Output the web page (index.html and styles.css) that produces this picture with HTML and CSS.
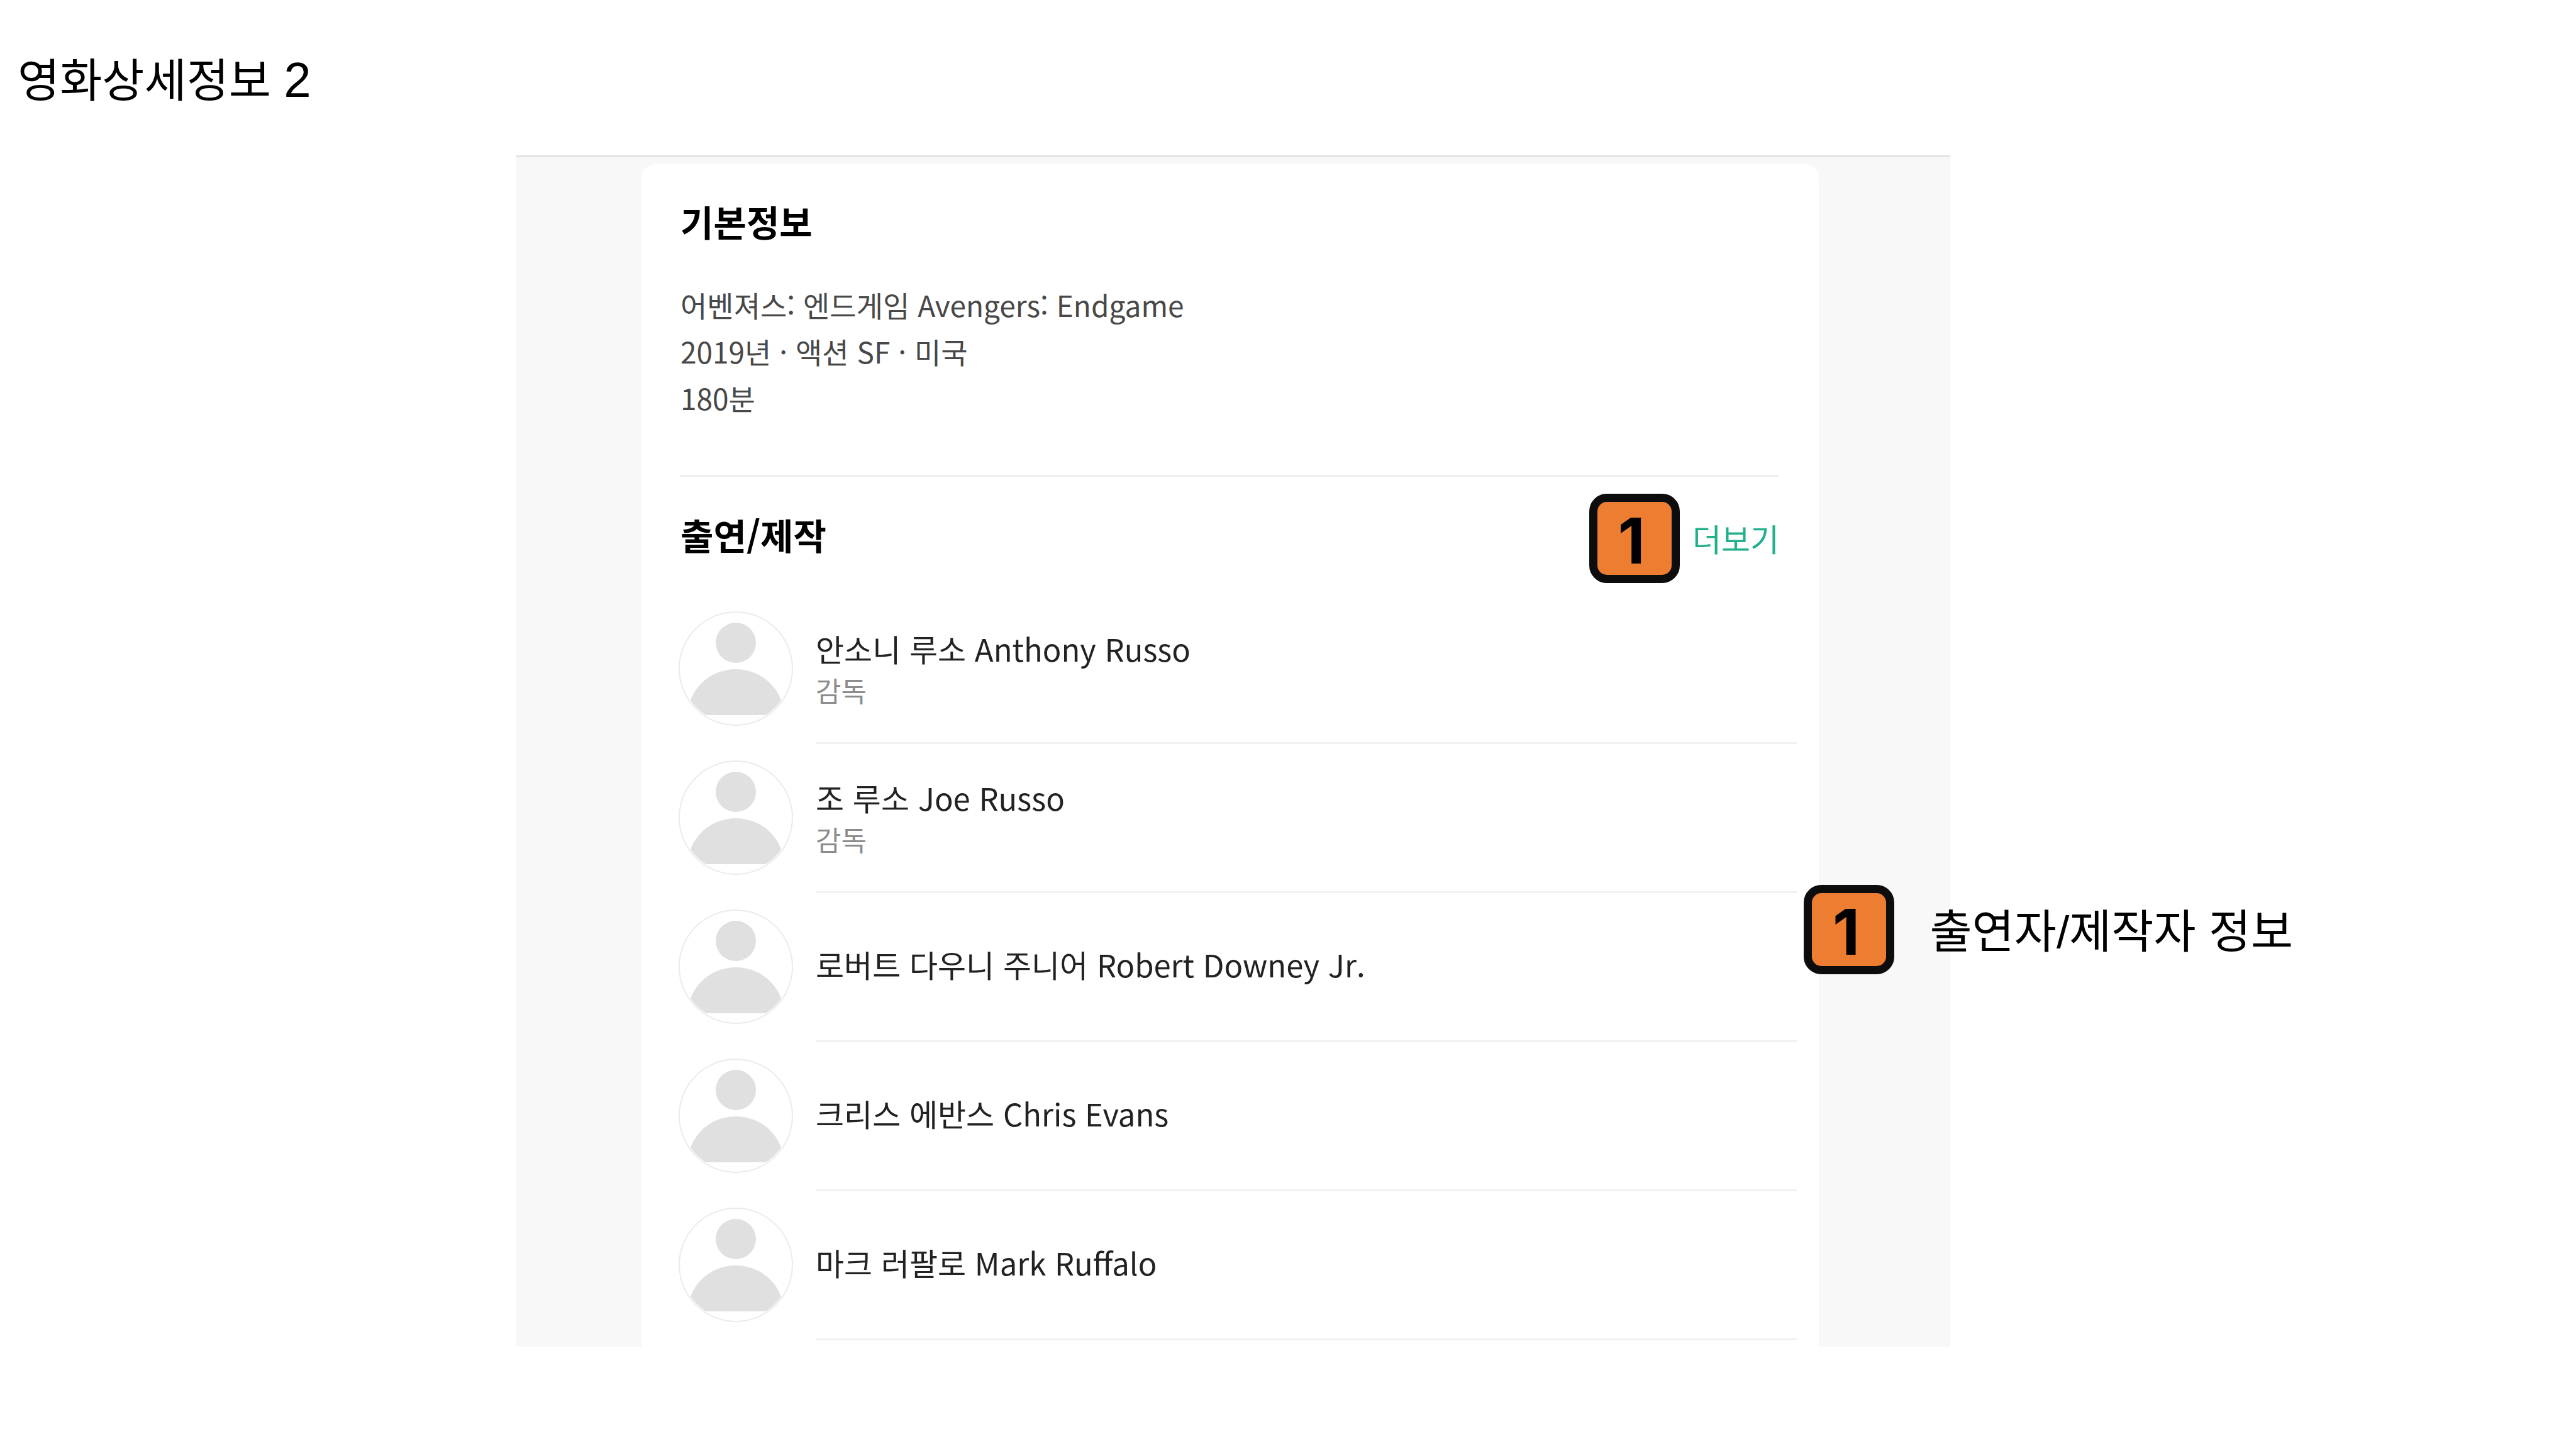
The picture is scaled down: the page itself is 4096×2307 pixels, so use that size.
FILE: index.html
```html
<!DOCTYPE html>
<html lang="ko">
<head>
<meta charset="utf-8">
<title>영화상세정보 2</title>
<link rel="stylesheet" href="styles.css">
</head>
<body>
<svg width="0" height="0" class="defs" aria-hidden="true">
  <defs>
    <clipPath id="face-clip"><circle cx="91" cy="91" r="88"/></clipPath>
    <symbol id="person" viewBox="0 0 182 182">
      <circle cx="91" cy="91" r="90" fill="#fff" stroke="#ebebeb" stroke-width="2"/>
      <g fill="#e0e0e0" clip-path="url(#face-clip)">
        <circle cx="91" cy="50" r="32"/>
        <path d="M15 165a76 73 0 0 1 152 0z"/>
      </g>
    </symbol>
  </defs>
</svg>
<main class="slide">
  <h1 class="slide-title">영화상세정보 <span class="numeral">2</span></h1>
  <div class="stage">
    <div class="frame">
      <article class="card">
        <section class="info">
          <h2 class="heading">기본정보</h2>
          <p class="facts">어벤져스: 엔드게임 Avengers: Endgame<br>2019년 · 액션 SF · 미국<br>180분</p>
        </section>
        <section class="credits">
          <header class="credits-head">
            <h2 class="heading">출연/제작</h2>
            <a class="more" href="#">더보기</a>
            <span class="badge badge-more">1</span>
          </header>
          <ul class="people">
            <li class="person">
              <svg class="avatar" aria-hidden="true"><use href="#person"/></svg>
              <div class="person-text with-role"><span class="name">안소니 루소 Anthony Russo</span><span class="role">감독</span></div>
            </li>
            <li class="person">
              <svg class="avatar" aria-hidden="true"><use href="#person"/></svg>
              <div class="person-text with-role"><span class="name">조 루소 Joe Russo</span><span class="role">감독</span></div>
            </li>
            <li class="person">
              <svg class="avatar" aria-hidden="true"><use href="#person"/></svg>
              <div class="person-text"><span class="name">로버트 다우니 주니어 Robert Downey Jr.</span></div>
            </li>
            <li class="person">
              <svg class="avatar" aria-hidden="true"><use href="#person"/></svg>
              <div class="person-text"><span class="name">크리스 에반스 Chris Evans</span></div>
            </li>
            <li class="person">
              <svg class="avatar" aria-hidden="true"><use href="#person"/></svg>
              <div class="person-text"><span class="name">마크 러팔로 Mark Ruffalo</span></div>
            </li>
          </ul>
        </section>
      </article>
      <aside class="note">
        <span class="badge">1</span>
        <p class="note-text">출연자/제작자 정보</p>
      </aside>
    </div>
  </div>
</main>
</body>
</html>
```
FILE: styles.css
```css
* {
  box-sizing: border-box;
}

body {
  margin: 0;
  background: #fff;
  color: #000;
  font-family: "Noto Sans CJK KR", sans-serif;
  font-kerning: normal;
}

h1, h2, p, ul {
  margin: 0;
  padding: 0;
}

.defs {
  position: absolute;
}

.slide {
  min-height: 100vh;
}

.slide-title,
.note-text {
  font-family: "Liberation Sans", "Noto Sans CJK KR", sans-serif;
  font-size: 73px;
  font-weight: 400;
  line-height: 88px;
  white-space: nowrap;
}

.slide-title {
  padding: 85px 28px 74px;
}

.numeral {
  font-size: 78px;
  line-height: 78px;
}

/* Captured screen, set off-centre on the slide */
.stage {
  display: grid;
  grid-template-columns: 821fr 2280fr 995fr;
}

.frame {
  position: relative;
  grid-column: 2;
  display: grid;
  grid-template-columns: 199fr 1872fr 209fr;
  padding-top: 11px;
  border-top: 3px solid #e3e3e3;
  background: #f8f8f8;
}

.card {
  grid-column: 2;
  min-width: 0;
  padding: 48px 0 11px;
  border-radius: 22px 22px 0 0;
  background: #fff;
}

.heading {
  font-size: 57px;
  font-weight: 700;
  line-height: 84px;
}

.info {
  margin: 0 63px 0 62px;
  padding-bottom: 86px;
  border-bottom: 3px solid #efefef;
}

.info .heading {
  margin-bottom: 54px;
}

.facts {
  color: #484848;
  font-size: 46px;
  line-height: 74px;
}

.credits-head {
  position: relative;
  display: flex;
  align-items: flex-end;
  justify-content: space-between;
  margin: 49px 63px 55px 62px;
}

.more {
  color: #22b08c;
  font-size: 50px;
  line-height: 72px;
  text-decoration: none;
}

.badge {
  display: flex;
  flex: none;
  align-items: center;
  justify-content: center;
  width: 144px;
  height: 142px;
  padding: 8px 10px 0 0;
  border: 13px solid #0d0d0d;
  border-radius: 28px;
  background: #ed7d31;
  color: #000;
  font-family: Inter, sans-serif;
  font-size: 100px;
  font-weight: 700;
  line-height: 100px;
}

.badge-more {
  position: absolute;
  top: -22px;
  right: 158px;
}

.people {
  padding: 0 35px 0 59px;
  list-style: none;
}

.person {
  display: flex;
  gap: 36px;
}

.avatar {
  flex: none;
  width: 182px;
  height: 182px;
  margin: 26px 0 29px;
}

.person-text {
  display: flex;
  flex: 1;
  flex-direction: column;
  justify-content: center;
  padding-bottom: 8px;
  border-bottom: 3px solid #f1f1f1;
}

.person-text.with-role {
  padding: 4px 0 0;
}

.name {
  color: #222;
  font-size: 49px;
  line-height: 64px;
}

.role {
  color: #8c8c8c;
  font-size: 44px;
  line-height: 68px;
}

/* Callout laid over the edge of the screen */
.note {
  position: absolute;
  top: 1157px;
  left: 89.8%;
  display: flex;
  align-items: center;
  gap: 56px;
}

.note-text {
  padding-top: 8px;
}
```
